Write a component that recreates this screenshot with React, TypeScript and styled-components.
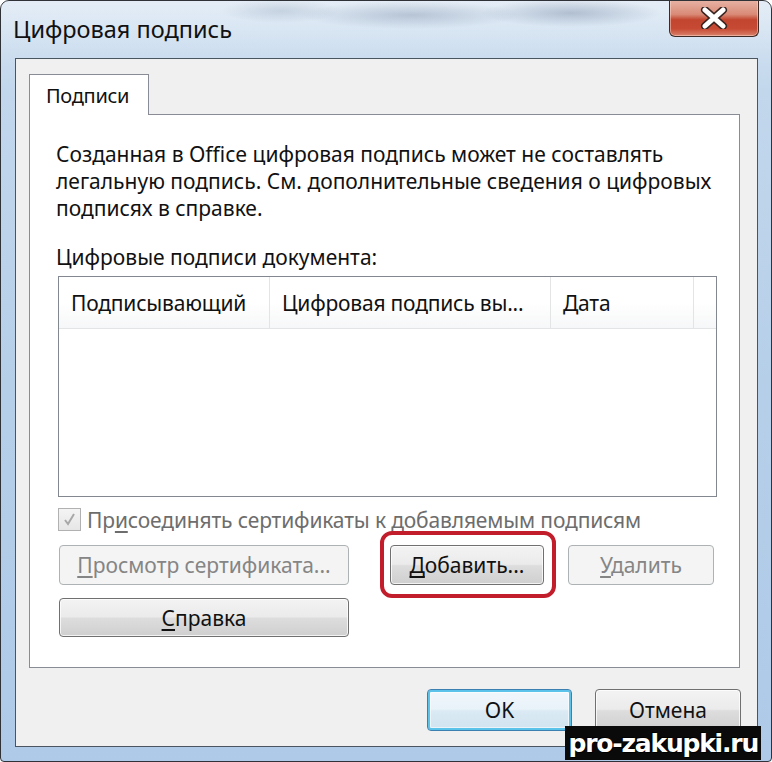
import styled, { createGlobalStyle, css } from 'styled-components';

const GlobalStyle = createGlobalStyle`
  html, body {
    margin: 0;
    padding: 0;
    background: #ffffff;
  }
  body {
    font-family: 'Noto Sans', 'Open Sans', sans-serif;
  }
`;

const Window = styled.div`
  position: relative;
  box-sizing: border-box;
  width: 772px;
  height: 762px;
  padding: 0 13px 14px 14px;
  display: flex;
  flex-direction: column;
  border: 1px solid #2f3338;
  border-radius: 9px 9px 4px 4px;
  background: linear-gradient(180deg, #d9e6f3 0%, #c2d7ec 12%, #b6cfe9 50%, #aecae8 100%);
  overflow: hidden;
`;

const TitleBar = styled.div`
  height: 57px;
  display: flex;
  align-items: flex-start;
  justify-content: space-between;
  background:
    radial-gradient(ellipse 90px 14px at 570px 12px, rgba(90, 110, 140, 0.35), transparent),
    radial-gradient(ellipse 110px 14px at 410px 14px, rgba(90, 110, 140, 0.3), transparent),
    radial-gradient(ellipse 60px 12px at 280px 10px, rgba(90, 110, 140, 0.2), transparent),
    linear-gradient(180deg, rgba(255, 255, 255, 0.3), rgba(255, 255, 255, 0));
  margin: 0 -13px 0 -14px;
  padding: 0 12px 0 12px;
`;

const Title = styled.div`
  margin-top: 12px;
  font-size: 23.5px;
  color: #111;
`;

const CloseButton = styled.div`
  width: 90px;
  height: 37px;
  margin-top: -1px;
  box-sizing: border-box;
  border: 1px solid #3d2a27;
  border-top: none;
  border-radius: 0 0 6px 6px;
  background: linear-gradient(180deg, #e8b4a6 0%, #d98a76 40%, #c2452f 55%, #c74a34 80%, #d9826c 100%);
  display: flex;
  align-items: center;
  justify-content: center;
  box-shadow: inset 0 0 0 1px rgba(255, 220, 210, 0.5);
`;

const Client = styled.div`
  flex: 1;
  display: flex;
  flex-direction: column;
  background: #f0f0f0;
  border: 1px solid #4a5560;
  padding: 15px 18px 0 13px;
`;

const TabStrip = styled.div`
  display: flex;
  position: relative;
  z-index: 1;
  margin-bottom: -1px;
`;

const Tab = styled.div`
  box-sizing: border-box;
  width: 120px;
  height: 41px;
  padding: 7px 0 0 16px;
  background: #ffffff;
  border: 1px solid #898c95;
  border-bottom: none;
  font-size: 20px;
  letter-spacing: -0.3px;
  color: #111;
`;

const Panel = styled.div`
  box-sizing: border-box;
  width: 711px;
  height: 554px;
  background: #ffffff;
  border: 1px solid #898c95;
  padding: 26px 22px 0 26px;
  display: flex;
  flex-direction: column;
`;

const Paragraph = styled.p`
  margin: 0;
  font-size: 21px;
  line-height: 27px;
  color: #111;
`;

const Label = styled.div`
  margin-top: 22px;
  font-size: 21px;
  line-height: 27px;
  color: #111;
`;

const ListBox = styled.div`
  box-sizing: border-box;
  margin: 5px 0 0 2px;
  width: 659px;
  height: 221px;
  border: 1px solid #828790;
  background: #fff;
  display: flex;
  flex-direction: column;
`;

const HeaderRow = styled.div`
  display: grid;
  grid-template-columns: 211px 281px 143px 1fr;
  height: 51px;
  border-bottom: 1px solid #e3e4e6;
  background: linear-gradient(180deg, #ffffff 0%, #ffffff 50%, #f6f7f8 100%);
`;

const HeaderCell = styled.div<{ $last?: boolean }>`
  display: flex;
  align-items: center;
  padding-left: 12px;
  font-size: 21px;
  letter-spacing: -0.2px;
  color: #111;
  white-space: nowrap;
  overflow: hidden;
  border-right: ${(p) => (p.$last ? 'none' : '1px solid #e3e4e6')};
`;

const CheckRow = styled.div`
  margin-top: 9px;
  display: flex;
  align-items: center;
  gap: 6px;
  height: 27px;
  font-size: 21px;
  letter-spacing: -0.15px;
  color: #6d6d6d;
`;

const CheckBox = styled.div`
  box-sizing: border-box;
  width: 23px;
  height: 23px;
  margin-left: 2px;
  border: 1px solid #b1b1b1;
  background: linear-gradient(180deg, #f4f4f4, #e6e6e6);
  display: flex;
  align-items: center;
  justify-content: center;
`;

const ButtonRow = styled.div<{ $top: number }>`
  display: flex;
  align-items: center;
  margin-top: ${(p) => p.$top}px;
  padding-left: 3px;
`;

const Button = styled.div<{ $w: number; $h?: number; $disabled?: boolean; $focus?: boolean }>`
  position: relative;
  box-sizing: border-box;
  width: ${(p) => p.$w}px;
  height: ${(p) => p.$h ?? 40}px;
  border-radius: 4px;
  display: flex;
  align-items: center;
  justify-content: center;
  font-size: 21px;
  color: #111;
  border: 1px solid #707070;
  background: linear-gradient(180deg, #f3f3f3 0%, #ebebeb 48%, #dddddd 52%, #cfcfcf 100%);
  box-shadow: inset 0 0 0 1px rgba(255, 255, 255, 0.75);
  ${(p) =>
    p.$disabled &&
    css`
      color: #858585;
      border-color: #adb2b5;
      background: #f4f4f4;
      box-shadow: none;
    `}
  ${(p) =>
    p.$focus &&
    css`
      border-color: #3c7fb1;
      background: linear-gradient(180deg, #f2f8fc 0%, #e8f2f9 48%, #dbeaf4 52%, #cfe3f0 100%);
      box-shadow: inset 0 0 0 2px #5bc3ea, inset 0 0 0 3px rgba(255, 255, 255, 0.6);
    `}
`;

const Highlighted = styled.div`
  position: relative;
  margin-left: 41px;
  &::before {
    content: '';
    position: absolute;
    left: -10px;
    right: -12px;
    top: -14px;
    bottom: -13px;
    border: 4px solid #c21d2b;
    border-radius: 12px;
  }
`;

const U = styled.span`
  text-decoration: underline;
  text-underline-offset: 3px;
`;

const Footer = styled.div`
  display: flex;
  justify-content: flex-end;
  gap: 23px;
  margin-top: 21px;
  margin-right: -2px;
`;

const Watermark = styled.div`
  position: absolute;
  right: 10px;
  bottom: 1px;
  padding: 0 3px;
  height: 34px;
  display: flex;
  align-items: center;
  background: #0a0a0a;
  color: #ffffff;
  font-family: 'DejaVu Sans', sans-serif;
  font-weight: bold;
  font-size: 25px;
  letter-spacing: -1.2px;
  text-shadow: 1px 1px 0 #000, -1px -1px 0 #000;
`;

export default function App() {
  return (
    <>
      <GlobalStyle />
      <Window>
        <TitleBar>
          <Title>Цифровая подпись</Title>
          <CloseButton>
            <svg width="30" height="22" viewBox="0 0 30 22">
              <path d="M6 3 L24 19 M24 3 L6 19" stroke="#3a2420" strokeWidth="8" strokeLinecap="round" />
              <path d="M6 3 L24 19 M24 3 L6 19" stroke="#ffffff" strokeWidth="5" strokeLinecap="round" />
            </svg>
          </CloseButton>
        </TitleBar>
        <Client>
          <TabStrip>
            <Tab>Подписи</Tab>
          </TabStrip>
          <Panel>
            <Paragraph>
              Созданная в Office цифровая подпись может не составлять
              <br />
              легальную подпись. См. дополнительные сведения о цифровых
              <br />
              подписях в справке.
            </Paragraph>
            <Label>Цифровые подписи документа:</Label>
            <ListBox>
              <HeaderRow>
                <HeaderCell>Подписывающий</HeaderCell>
                <HeaderCell>Цифровая подпись вы...</HeaderCell>
                <HeaderCell>Дата</HeaderCell>
                <HeaderCell $last />
              </HeaderRow>
            </ListBox>
            <CheckRow>
              <CheckBox>
                <svg width="15" height="15" viewBox="0 0 15 15">
                  <path d="M3 8 L6 12 L12 2" stroke="#a8a8a8" strokeWidth="2" fill="none" />
                </svg>
              </CheckBox>
              <span>
                Пр<U>и</U>соединять сертификаты к добавляемым подписям
              </span>
            </CheckRow>
            <ButtonRow $top={12}>
              <Button $w={290} $disabled>
                <span>
                  <U>П</U>росмотр сертификата...
                </span>
              </Button>
              <Highlighted>
                <Button $w={154}>
                  <span>
                    <U>Д</U>обавить...
                  </span>
                </Button>
              </Highlighted>
              <Button $w={146} $disabled style={{ marginLeft: 24 }}>
                <span>
                  <U>У</U>далить
                </span>
              </Button>
            </ButtonRow>
            <ButtonRow $top={13}>
              <Button $w={290} $h={39}>
                <span>
                  <U>С</U>правка
                </span>
              </Button>
            </ButtonRow>
          </Panel>
          <Footer>
            <Button $w={145} $h={42} $focus>
              OK
            </Button>
            <Button $w={146} $h={42}>
              Отмена
            </Button>
          </Footer>
        </Client>
        <Watermark>pro-zakupki.ru</Watermark>
      </Window>
    </>
  );
}
